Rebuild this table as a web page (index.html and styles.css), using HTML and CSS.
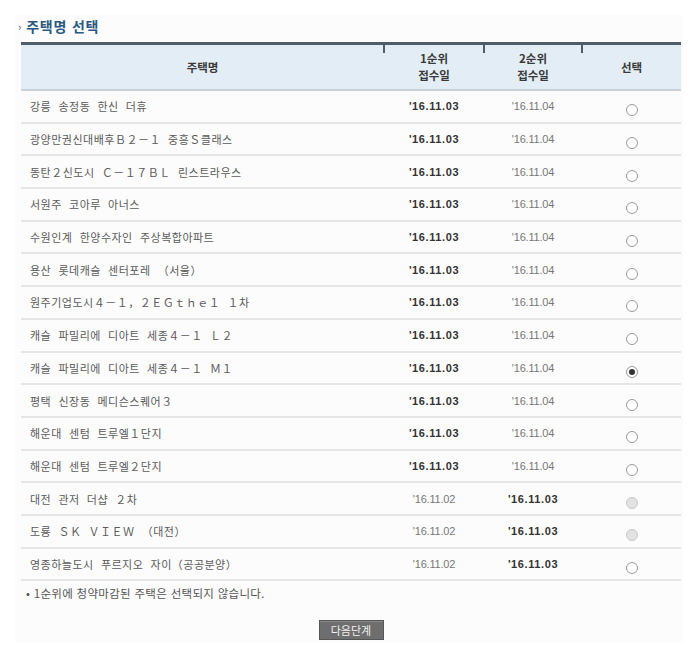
FILE: index.html
```html
<!DOCTYPE html>
<html lang="ko">
<head>
<meta charset="utf-8">
<link rel="stylesheet" href="styles.css">
</head>
<body>
<div class="panel">
  <div class="inner">
    <h2 class="title"><span class="arrow">›</span>주택명 선택</h2>
    <table class="grid">
      <colgroup>
        <col class="c-name"><col class="c-d1"><col class="c-d2"><col class="c-sel">
      </colgroup>
      <thead>
        <tr>
          <th>주택명</th>
          <th class="tick">1순위<br>접수일</th>
          <th class="tick">2순위<br>접수일</th>
          <th class="tick">선택</th>
        </tr>
      </thead>
      <tbody>
        <tr><td class="name">강릉&nbsp; 송정동&nbsp; 한신&nbsp; 더휴</td><td class="b">'16.11.03</td><td class="n">'16.11.04</td><td><span class="radio"></span></td></tr>
        <tr><td class="name">광양만권신대배후Ｂ２－１&nbsp; 중흥Ｓ클래스</td><td class="b">'16.11.03</td><td class="n">'16.11.04</td><td><span class="radio"></span></td></tr>
        <tr><td class="name">동탄２신도시&nbsp; Ｃ－１７ＢＬ&nbsp; 린스트라우스</td><td class="b">'16.11.03</td><td class="n">'16.11.04</td><td><span class="radio"></span></td></tr>
        <tr><td class="name">서원주&nbsp; 코아루&nbsp; 아너스</td><td class="b">'16.11.03</td><td class="n">'16.11.04</td><td><span class="radio"></span></td></tr>
        <tr><td class="name">수원인계&nbsp; 한양수자인&nbsp; 주상복합아파트</td><td class="b">'16.11.03</td><td class="n">'16.11.04</td><td><span class="radio"></span></td></tr>
        <tr><td class="name">용산&nbsp; 롯데캐슬&nbsp; 센터포레&nbsp; （서울）</td><td class="b">'16.11.03</td><td class="n">'16.11.04</td><td><span class="radio"></span></td></tr>
        <tr><td class="name">원주기업도시４－１，２ＥＧｔｈｅ１&nbsp; １차</td><td class="b">'16.11.03</td><td class="n">'16.11.04</td><td><span class="radio"></span></td></tr>
        <tr><td class="name">캐슬&nbsp; 파밀리에&nbsp; 디아트&nbsp; 세종４－１&nbsp; Ｌ２</td><td class="b">'16.11.03</td><td class="n">'16.11.04</td><td><span class="radio"></span></td></tr>
        <tr><td class="name">캐슬&nbsp; 파밀리에&nbsp; 디아트&nbsp; 세종４－１&nbsp; Ｍ１</td><td class="b">'16.11.03</td><td class="n">'16.11.04</td><td><span class="radio checked"></span></td></tr>
        <tr><td class="name">평택&nbsp; 신장동&nbsp; 메디슨스퀘어３</td><td class="b">'16.11.03</td><td class="n">'16.11.04</td><td><span class="radio"></span></td></tr>
        <tr><td class="name">해운대&nbsp; 센텀&nbsp; 트루엘１단지</td><td class="b">'16.11.03</td><td class="n">'16.11.04</td><td><span class="radio"></span></td></tr>
        <tr><td class="name">해운대&nbsp; 센텀&nbsp; 트루엘２단지</td><td class="b">'16.11.03</td><td class="n">'16.11.04</td><td><span class="radio"></span></td></tr>
        <tr><td class="name">대전&nbsp; 관저&nbsp; 더샵&nbsp; ２차</td><td class="n">'16.11.02</td><td class="b">'16.11.03</td><td><span class="radio disabled"></span></td></tr>
        <tr><td class="name">도룡&nbsp; ＳＫ&nbsp; ＶＩＥＷ&nbsp; （대전）</td><td class="n">'16.11.02</td><td class="b">'16.11.03</td><td><span class="radio disabled"></span></td></tr>
        <tr><td class="name">영종하늘도시&nbsp; 푸르지오&nbsp; 자이（공공분양）</td><td class="n">'16.11.02</td><td class="b">'16.11.03</td><td><span class="radio"></span></td></tr>
      </tbody>
    </table>
    <p class="note">• 1순위에 청약마감된 주택은 선택되지 않습니다.</p>
    <div class="actions"><button class="btn" type="button">다음단계</button></div>
  </div>
</div>
</body>
</html>
```

FILE: styles.css
```css
html, body {
  margin: 0;
  padding: 0;
  background: #ffffff;
}
body {
  font-family: "Noto Sans CJK KR", "Noto Sans", sans-serif;
  color: #555;
  font-size: 12px;
}
.panel {
  margin: 15px 0 0 15px;
  width: 668px;
  height: 627px;
  background: #fcfcfc;
  box-sizing: border-box;
}
.inner {
  padding: 0 0 0 6px;
  width: 660px;
}
.title {
  margin: 0 0 0 -3px;
  height: 27px;
  line-height: 20px;
  font-size: 14px;
  font-weight: bold;
  color: #2a5880;
  letter-spacing: 0.8px;
  display: flex;
  align-items: center;
  padding-bottom: 6px;
  box-sizing: border-box;
}
.arrow {
  font-size: 11px;
  color: #555;
  margin-right: 4px;
  font-weight: normal;
}
.grid {
  width: 660px;
  border-collapse: collapse;
  table-layout: fixed;
}
.c-name { width: 363px; }
.c-d1 { width: 100px; }
.c-d2 { width: 98px; }
.c-sel { width: 99px; }
.grid thead th {
  background: #e3edf6;
  border-top: 3px solid #4e5d68;
  border-bottom: 2px solid #c9d0d6;
  height: 44px;
  padding: 0;
  font-size: 11.5px;
  font-weight: bold;
  color: #3a3a3a;
  line-height: 17px;
  position: relative;
  text-align: center;
  vertical-align: middle;
}
.grid thead th.tick::before {
  content: "";
  position: absolute;
  left: -1px;
  top: 0;
  width: 2px;
  height: 8px;
  background: #4e5d68;
}
.grid tbody td {
  height: 30.7px;
  padding: 0;
  border-bottom: 2px solid #e6e6e6;
  text-align: center;
  vertical-align: middle;
  font-size: 11px;
  color: #666;
  white-space: nowrap;
}
.grid tbody td.name {
  text-align: left;
  padding-left: 9px;
  font-size: 11px;
  letter-spacing: 0.5px;
  color: #5a5a5a;
}
.grid tbody td.b {
  font-weight: bold;
  color: #333;
  font-size: 11px;
  letter-spacing: 0.6px;
  font-family: "Liberation Sans", Arial, sans-serif;
}
.grid tbody td.n {
  color: #777;
  font-size: 11px;
  font-family: "Liberation Sans", Arial, sans-serif;
  letter-spacing: -0.2px;
}
.radio {
  display: inline-block;
  width: 10px;
  height: 10px;
  border: 1px solid #9a9a9a;
  border-radius: 50%;
  background: #fff;
  vertical-align: middle;
  position: relative;
  top: 2px;
}
.radio.checked::after {
  content: "";
  position: absolute;
  left: 2px;
  top: 2px;
  width: 6px;
  height: 6px;
  border-radius: 50%;
  background: #333;
}
.radio.disabled {
  background: #e2e2e2;
  border-color: #c8c8c8;
}
.note {
  margin: 0;
  padding: 4px 0 0 5px;
  height: 20px;
  font-size: 11.5px;
  letter-spacing: 0.3px;
  color: #555;
  line-height: 16px;
}
.actions {
  display: flex;
  justify-content: center;
  padding-top: 15px;
}
.btn {
  width: 65px;
  height: 20px;
  background: #6e6e6e;
  color: #f0f0f0;
  border: 1px solid #555;
  font-family: "Noto Sans CJK KR", sans-serif;
  font-size: 11px;
  padding: 0;
  line-height: 18px;
  box-shadow: inset 0 1px 0 #888;
}
```
